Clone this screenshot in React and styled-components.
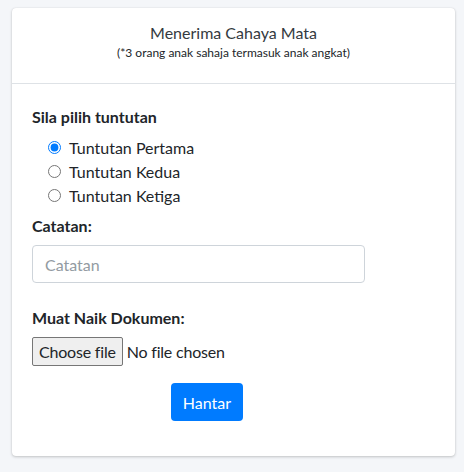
import React from "react";
import styled, { createGlobalStyle } from "styled-components";

const GlobalStyle = createGlobalStyle`
  body {
    margin: 0;
    background: #f4f6f9;
    font-family: "Lato", "Liberation Sans", sans-serif;
    color: #212529;
  }
`;

const Page = styled.div`
  padding: 8px 9px 16px 12px;
`;

const Card = styled.div`
  background: #fff;
  border-radius: 4px;
  box-shadow: 0 0 1px rgba(0, 0, 0, 0.13), 0 1px 3px rgba(0, 0, 0, 0.2);
`;

const CardHeader = styled.div`
  border-bottom: 1px solid #dee2e6;
  text-align: center;
  padding: 14px 20px 21px;
`;

const Title = styled.div`
  font-size: 16px;
  line-height: 22px;
  color: #343a40;
`;

const Subtitle = styled.div`
  font-size: 12px;
  line-height: 18px;
  color: #212529;
`;

const CardBody = styled.form`
  padding: 21px 20px 35px;
  display: flex;
  flex-direction: column;
`;

const Label = styled.div`
  font-size: 16px;
  font-weight: 700;
  line-height: 24px;
  margin-bottom: ${(p) => p.$mb ?? 7}px;
`;

const RadioList = styled.div`
  display: flex;
  flex-direction: column;
  padding-left: 16px;
  margin-bottom: 7px;
`;

const RadioRow = styled.label`
  display: flex;
  align-items: center;
  gap: 8px;
  height: 24px;
  font-size: 16px;
  color: #212529;

  input {
    margin: 0;
    width: 13px;
    height: 13px;
    accent-color: #007bff;
  }
`;

const TextInput = styled.input`
  box-sizing: border-box;
  width: 333px;
  height: 38px;
  padding: 6px 12px;
  border: 1px solid #ced4da;
  border-radius: 4px;
  font-family: inherit;
  font-size: 16px;
  color: #495057;
  margin-bottom: 23px;

  &::placeholder {
    color: #939ba2;
  }
`;

const FileRow = styled.label`
  display: flex;
  align-items: center;
  gap: 4px;
  font-size: 16px;
  color: #212529;
  margin-bottom: 17px;
  letter-spacing: -0.2px;

  input {
    display: none;
  }
`;

const FileButton = styled.span`
  box-sizing: border-box;
  height: 29px;
  padding: 0 6px;
  display: inline-flex;
  align-items: center;
  background: #efefef;
  border: 1px solid #767676;
  border-radius: 2px;
`;

const SubmitButton = styled.button`
  align-self: flex-start;
  margin-left: 139px;
  width: 72px;
  height: 38px;
  border: none;
  border-radius: 4px;
  background: #007bff;
  color: #fff;
  font-family: inherit;
  font-size: 16px;
`;

const options = ["Tuntutan Pertama", "Tuntutan Kedua", "Tuntutan Ketiga"];

export default function App() {
  return (
    <>
      <GlobalStyle />
      <Page>
        <Card>
          <CardHeader>
            <Title>Menerima Cahaya Mata</Title>
            <Subtitle>(*3 orang anak sahaja termasuk anak angkat)</Subtitle>
          </CardHeader>
          <CardBody onSubmit={(e) => e.preventDefault()}>
            <Label $mb={6}>Sila pilih tuntutan</Label>
            <RadioList>
              {options.map((opt, i) => (
                <RadioRow key={opt}>
                  <input type="radio" name="tuntutan" defaultChecked={i === 0} />
                  {opt}
                </RadioRow>
              ))}
            </RadioList>
            <Label>Catatan:</Label>
            <TextInput placeholder="Catatan" />
            <Label>Muat Naik Dokumen:</Label>
            <FileRow>
              <input type="file" />
              <FileButton>Choose file</FileButton>
              <span>No file chosen</span>
            </FileRow>
            <SubmitButton type="submit">Hantar</SubmitButton>
          </CardBody>
        </Card>
      </Page>
    </>
  );
}
